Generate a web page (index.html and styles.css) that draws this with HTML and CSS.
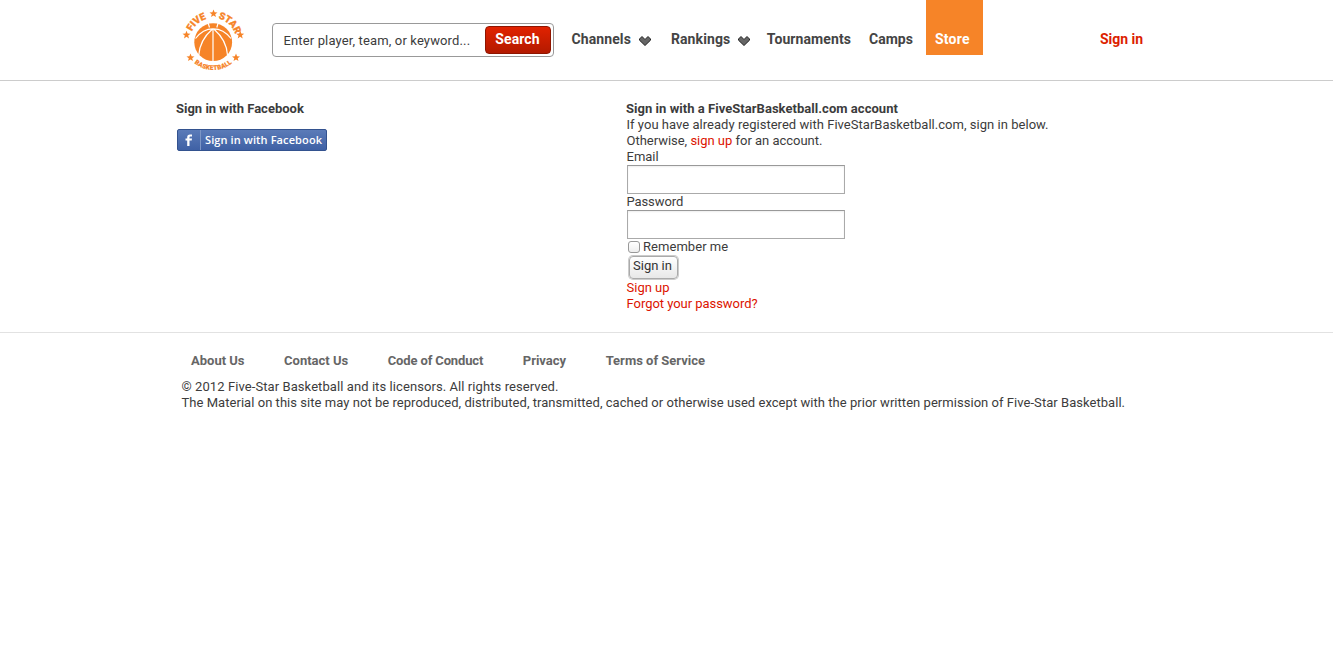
FILE: index.html
```html
<!DOCTYPE html>
<html lang="en">
<head>
<meta charset="utf-8">
<title>Five-Star Basketball - Sign in</title>
<link rel="stylesheet" href="styles.css">
</head>
<body>
<header class="header">
  <div class="wrap bar">
    <svg class="logo" width="66" height="66" viewBox="0 0 66 66">
      <defs>
        <path id="arc-top" d="M9.5 34.500 A23.500 23.500 0 0 1 56.500 34.500"/>
        <path id="arc-bottom" d="M4.200 34 A29 29 0 0 0 62.200 34"/>
        <path id="star" d="M0-4L1.1-1.2 4-1.1 1.7.7 2.5 3.6 0 1.9-2.5 3.6-1.7.7-4-1.1-1.1-1.2Z"/>
      </defs>
      <circle cx="33.200" cy="35.200" r="18.900" class="orange"/>
      <path class="seam" d="M33 21.500V54.500M28 15.500L29.500 20.500M38.300 15.500L36.800 20.500M15.500 31.500C20 25.500 25 21.800 33 21.800S46.500 25.500 51 31.500M18.800 48C19.500 38 24.500 29 32 22.500M47.500 48C46.800 38 41.800 29 34.300 22.500"/>
      <text class="logo-top"><textPath href="#arc-top" startOffset="20.100" text-anchor="middle">FIVE</textPath></text>
      <text class="logo-top"><textPath href="#arc-top" startOffset="53.800" text-anchor="middle">STAR</textPath></text>
      <text class="logo-bottom"><textPath href="#arc-bottom" startOffset="50%" text-anchor="middle">BASKETBALL</textPath></text>
      <g class="orange">
        <use href="#star" x="33.500" y="6.500"/>
        <use href="#star" x="6.500" y="27.800"/>
        <use href="#star" x="60.200" y="27.800"/>
        <use href="#star" x="10.500" y="50.500"/>
        <use href="#star" x="56" y="50.500"/>
      </g>
    </svg>
    <form class="search">
      <span class="search-text">Enter player, team, or keyword...</span>
      <button type="button" class="search-btn">Search</button>
    </form>
    <nav class="nav">
      <a class="nav-item">Channels<svg class="chev" width="12" height="10" viewBox="0 0 12 10"><path d="M.5 3L3 .5 6 3.500 9 .5 11.500 3V4.200L6 9.500.5 4.200Z"/></svg></a>
      <a class="nav-item rankings">Rankings<svg class="chev" width="12" height="10" viewBox="0 0 12 10"><path d="M.5 3L3 .5 6 3.500 9 .5 11.500 3V4.200L6 9.500.5 4.200Z"/></svg></a>
      <a class="nav-item tournaments">Tournaments</a>
      <a class="nav-item camps">Camps</a>
      <a class="nav-item store">Store</a>
    </nav>
    <a class="nav-item signin">Sign in</a>
  </div>
</header>
<main class="wrap main">
  <section class="col">
    <h3 class="title title-fb">Sign in with Facebook</h3>
    <a class="fb"><span class="fb-icon"><svg width="8" height="12" viewBox="0 0 8 12"><path d="M2.200 12V6.500H.5V4.500H2.200V3.200C2.200 1.200 3.200.4 5 .4H7V2.400H5.600C4.800 2.400 4.500 2.700 4.500 3.400V4.500H7L6.700 6.500H4.500V12Z"/></svg></span><span class="fb-text">Sign in with Facebook</span></a>
  </section>
  <section class="col">
    <h3 class="title">Sign in with a FiveStarBasketball.com account</h3>
    <p class="line intro">If you have already registered with FiveStarBasketball.com, sign in below.</p>
    <p class="line otherwise">Otherwise, <a class="red">sign up</a> for an account.</p>
    <label class="line">Email</label>
    <input class="field" type="text">
    <label class="line password">Password</label>
    <input class="field" type="password">
    <label class="line remember"><input class="check" type="checkbox">Remember me</label>
    <button type="button" class="submit">Sign in</button>
    <a class="line red">Sign up</a>
    <a class="line red forgot">Forgot your password?</a>
  </section>
</main>
<footer class="footer">
  <div class="wrap">
    <nav class="links">
      <a>About Us</a><a>Contact Us</a><a class="conduct">Code of Conduct</a><a>Privacy</a><a>Terms of Service</a>
    </nav>
    <p class="legal copyright">© 2012 Five-Star Basketball and its licensors. All rights reserved.</p>
    <p class="legal">The Material on this site may not be reproduced, distributed, transmitted, cached or otherwise used except with the prior written permission of Five-Star Basketball.</p>
  </div>
</footer>
</body>
</html>
```
FILE: styles.css
```css
* { box-sizing: border-box; }
body { margin: 0; background: #fff; color: #3c3c3c; font: 13px/16px Roboto, sans-serif; }
h3, p { margin: 0; }
.wrap { width: 981px; margin: 0 auto; }
.header { height: 81px; border-bottom: 1px solid #ccc; }
.bar { display: flex; align-items: flex-start; height: 80px; }
.logo { margin: 7px 0 0 4px; }
.orange { fill: #f68428; }
.seam { fill: none; stroke: #fff; stroke-width: 1.2; }
.logo-top { fill: #f68428; stroke: #f68428; stroke-width: .3; font: 900 9.8px Roboto, sans-serif; letter-spacing: -.2px; }
.logo-bottom { fill: #f68428; stroke: #f68428; stroke-width: .2; font: 900 6.300px Roboto, sans-serif; letter-spacing: .2px; }
.search { display: flex; width: 282px; height: 34px; margin: 23px 0 0 26px; padding: 2px; border: 1px solid #999; border-radius: 4px; }
.search-text { flex: 1; padding-left: 8.500px; line-height: 30px; letter-spacing: .14px; white-space: nowrap; }
.search-btn { width: 66px; height: 28px; padding: 0 1px 2px 0; border: 1px solid #8f1500; border-radius: 4px; background: linear-gradient(#e12200, #b31a00); color: #fff; font: bold 14px/24px Roboto, sans-serif; letter-spacing: .1px; }
.nav { display: flex; margin-left: 17.500px; }
.nav-item { display: flex; height: 55px; padding-top: 31px; font-size: 14px; font-weight: bold; letter-spacing: .1px; color: #444; white-space: nowrap; }
.chev { margin: 4.500px 0 0 8px; fill: #666; stroke: #222; stroke-width: 1; }
.rankings { margin-left: 20px; }
.tournaments { margin-left: 16.500px; }
.camps { margin-left: 18px; letter-spacing: 0; }
.store { margin-left: 13px; padding-left: 9px; width: 57px; background: #f68428; color: #fff; letter-spacing: .25px; }
.signin { margin-left: 117px; color: #dc1e00; letter-spacing: 0; }
.main { display: flex; height: 251px; padding-top: 20px; }
.col { width: 450px; display: flex; flex-direction: column; align-items: flex-start; }
.title { font-size: 13px; font-weight: bold; line-height: 16px; letter-spacing: .04px; }
.title-fb { letter-spacing: 0; }
.fb { display: flex; width: 150px; height: 22px; margin: 12px 0 0 1px; border: 1px solid #33528f; border-radius: 2px; background: linear-gradient(#5b7bb8, #3f61a5); color: #fff; }
.fb-icon { width: 23px; padding: 4px 0 0 7px; border-right: 1px solid #7d96c6; fill: #fff; line-height: 0; }
.fb-text { padding-left: 4px; font: 600 11px/20px "Open Sans", sans-serif; letter-spacing: .11px; white-space: nowrap; }
.line { display: flex; height: 16px; padding-left: .5px; white-space: pre; }
.intro { letter-spacing: .03px; }
.otherwise { letter-spacing: -.02px; }
.password { letter-spacing: -.1px; }
.remember { padding-left: 0; letter-spacing: .05px; }
.red { padding-left: 0; color: #dc1400; }
.line.red { padding-left: .5px; }
.forgot { letter-spacing: -.04px; }
.field { width: 218px; height: 29px; margin: 0 0 0 1px; border: 1px solid #aaa; border-top-color: #999; box-shadow: inset 0 1px 2px #eee; }
.check { appearance: none; width: 12px; height: 12px; margin: 2px 3px 0 2px; border: 1px solid #999; border-radius: 3px; background: linear-gradient(#fff, #eee); }
.submit { width: 49px; height: 23px; margin: 1px 0 1px 3px; padding: 0 2px 3px 0; border: 1px solid #aaa; border-radius: 4px; background: linear-gradient(#fff, #e8e8e8); box-shadow: 0 0 0 1px #ccc; color: #333; font: 13px/16px Roboto, sans-serif; }
.footer { border-top: 1px solid #e2e2e2; padding-top: 20px; }
.links { display: flex; gap: 39.500px; margin: 0 0 10px 15px; font-weight: bold; color: #666; }
.conduct { letter-spacing: -.13px; }
.legal { padding-left: 5.500px; white-space: nowrap; letter-spacing: .042px; }
.copyright { letter-spacing: .08px; }
```
